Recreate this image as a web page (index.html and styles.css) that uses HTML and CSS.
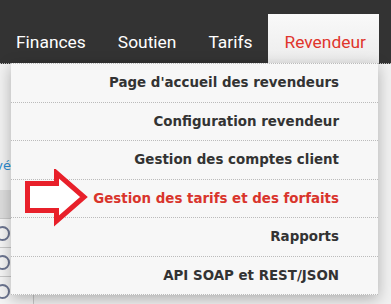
FILE: index.html
```html
<!doctype html>
<html lang="fr">
<head>
  <meta charset="utf-8">
  <title>Revendeur</title>
  <link rel="stylesheet" href="styles.css">
</head>
<body>
  <header class="topbar">
    <nav class="main-nav">
      <a class="nav-item" href="#">Finances</a>
      <a class="nav-item" href="#">Soutien</a>
      <a class="nav-item" href="#">Tarifs</a>
      <a class="nav-item active" href="#">Revendeur</a>
    </nav>
  </header>

  <main class="page">
    <div class="status-line"><a href="#">Approuvé</a></div>
    <table class="list">
      <thead>
        <tr><th>&nbsp;</th></tr>
      </thead>
      <tbody>
        <tr><td><span class="radio"></span></td></tr>
        <tr><td><span class="radio"></span></td></tr>
        <tr><td><span class="radio"></span></td></tr>
      </tbody>
    </table>
  </main>

  <ul class="dropdown">
    <li><a href="#">Page d'accueil des revendeurs</a></li>
    <li><a href="#">Configuration revendeur</a></li>
    <li><a href="#">Gestion des comptes client</a></li>
    <li class="current"><a href="#">Gestion des tarifs et des forfaits</a></li>
    <li><a href="#">Rapports</a></li>
    <li><a href="#">API SOAP et REST/JSON</a></li>
  </ul>

  <svg class="callout" width="66" height="60" viewBox="0 0 66 60">
    <polygon points="3.5,14.5 32.5,14.5 32.5,4 60,28 32.5,52 32.5,41.5 3.5,41.5"
             fill="#ffffff" stroke="#e8202a" stroke-width="5" stroke-linejoin="miter"/>
  </svg>
</body>
</html>
```

FILE: styles.css
```css
body {
  margin: 0;
  width: 391px;
  height: 304px;
  overflow: hidden;
  background: #f1f1f1;
  font-family: "DejaVu Sans", Verdana, sans-serif;
}

.topbar {
  height: 63px;
  background: #333333;
  border-bottom: 1px dotted #bbbbbb;
}

.main-nav {
  display: flex;
  align-items: flex-end;
  height: 63px;
}

.nav-item {
  display: block;
  height: 49px;
  line-height: 57px;
  padding: 0 16px;
  font-family: Roboto, "Liberation Sans", sans-serif;
  font-size: 17.4px;
  color: #ffffff;
  text-decoration: none;
}

.nav-item.active {
  color: #e0352c;
  padding-right: 13px;
  background: linear-gradient(#f9f9f9, #ececec);
}

.status-line {
  display: flex;
  justify-content: flex-end;
  width: 11px;
  height: 16px;
  padding-top: 94px;
  line-height: 16px;
  font-size: 13px;
  white-space: nowrap;
  overflow: hidden;
}

.status-line a {
  color: #2a8bd0;
  text-decoration: none;
}

.list {
  border-collapse: collapse;
  width: 40px;
  margin-top: 16px;
  margin-left: -6px;
}

.list th {
  height: 26px;
  background: #dcdcdc;
}

.list td {
  height: 26px;
  border-top: 1px solid #c8c8c8;
  border-right: 1px solid #c8c8c8;
  background: #f4f4f4;
}

.radio {
  display: block;
  width: 11px;
  height: 11px;
  border: 2px solid #6c7590;
  border-radius: 50%;
}

.dropdown {
  position: absolute;
  left: 11px;
  top: 63px;
  width: 367px;
  margin: 0;
  padding: 0;
  list-style: none;
  background: #f7f7f7;
  box-shadow: 0 4px 14px rgba(0, 0, 0, 0.28);
  border-top: 1px dotted #bbbbbb;
}

.dropdown li {
  height: 37.5px;
  border-bottom: 1px dotted #bbbbbb;
}

.dropdown a {
  display: block;
  line-height: 37.5px;
  padding-right: 39px;
  text-align: right;
  font-size: 13.4px;
  font-weight: bold;
  color: #333333;
  text-decoration: none;
}

.dropdown .current a {
  color: #d9342c;
}

.callout {
  position: absolute;
  left: 24px;
  top: 169px;
}
```
